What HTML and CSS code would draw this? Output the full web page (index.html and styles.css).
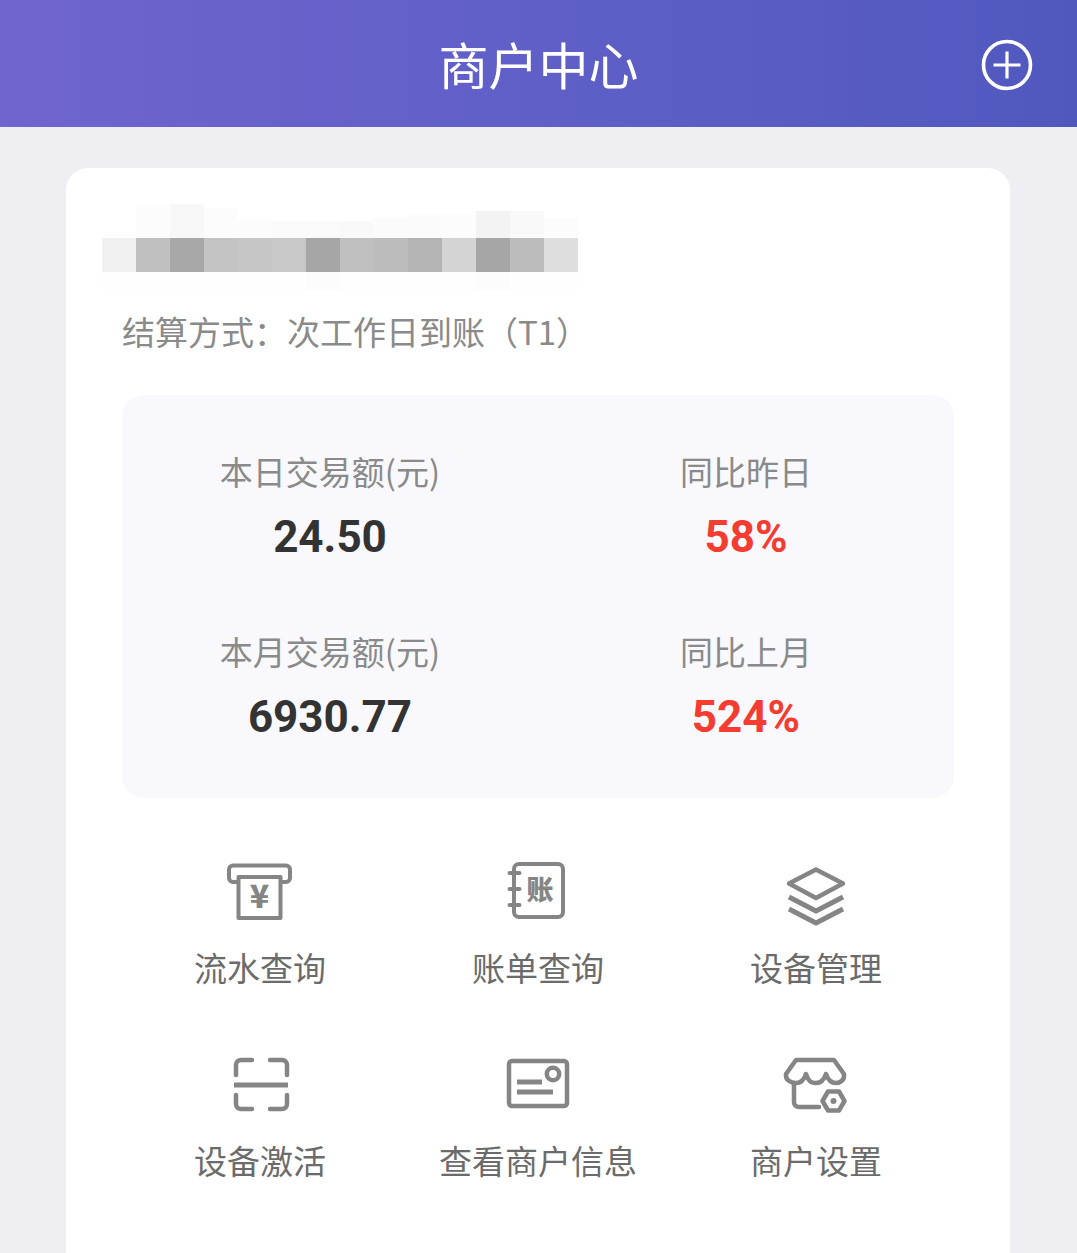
FILE: index.html
```html
<!DOCTYPE html>
<html lang="zh-CN">
<head>
<meta charset="utf-8">
<title>商户中心</title>
<link rel="stylesheet" href="styles.css">
</head>
<body>
<header class="topbar">
  <h1 class="topbar-title">商户中心</h1>
  <svg class="topbar-add" width="54" height="54" viewBox="0 0 54 54"><circle cx="27" cy="27" r="23.5" fill="none" stroke="#fff" stroke-width="3.6"/><path d="M27 13.500V40.500M13.500 27H40.500" fill="none" stroke="#fff" stroke-width="3.200"/></svg>
</header>
<main class="card">
  <div class="mosaic" aria-hidden="true">
    <div class="mosaic-row mosaic-top"><i></i><i></i><i></i><i></i><i></i><i></i><i></i><i></i><i></i><i></i><i></i><i></i><i></i><i></i></div>
    <div class="mosaic-row mosaic-mid"><i></i><i></i><i></i><i></i><i></i><i></i><i></i><i></i><i></i><i></i><i></i><i></i><i></i><i></i></div>
    <div class="mosaic-row mosaic-low"><i></i><i></i><i></i><i></i><i></i><i></i><i></i><i></i><i></i><i></i><i></i><i></i><i></i><i></i></div>
  </div>
  <p class="settle">结算方式：次工作日到账（T1）</p>
  <section class="stats">
    <div class="stat"><span class="stat-label">本日交易额(元)</span><strong class="stat-value">24.50</strong></div>
    <div class="stat"><span class="stat-label">同比昨日</span><strong class="stat-value stat-up">58%</strong></div>
    <div class="stat"><span class="stat-label">本月交易额(元)</span><strong class="stat-value">6930.77</strong></div>
    <div class="stat"><span class="stat-label">同比上月</span><strong class="stat-value stat-up">524%</strong></div>
  </section>
  <nav class="menu">
    <a class="menu-item">
      <svg class="icon" viewBox="0 0 80 80"><path d="M17 31H13a4 4 0 0 1-4-4V18.500a4 4 0 0 1 4-4H66a4 4 0 0 1 4 4V27a4 4 0 0 1-4 4H62"/><rect x="18.500" y="26" width="42" height="41"/><text class="icon-glyph" x="39.500" y="57" font-size="32">¥</text></svg>
      <span>流水查询</span>
    </a>
    <a class="menu-item">
      <svg class="icon" viewBox="0 0 80 80"><path d="M16 22V18a5 5 0 0 1 5-5H60a5 5 0 0 1 5 5V61a5 5 0 0 1-5 5H21a5 5 0 0 1-5-5V22"/><path d="M11.500 22H21.500M11.500 38H21.500M11.500 54H21.500"/><text class="icon-glyph" x="42" y="49" font-size="27">账</text></svg>
      <span>账单查询</span>
    </a>
    <a class="menu-item">
      <svg class="icon icon-bold" viewBox="0 0 80 80"><path d="M40 18.500L67 32.500L40 47L13 32.500Z"/><path class="icon-heavy" d="M13 46L40 60L67 46"/><path class="icon-heavy" d="M13 58L40 72L67 58"/></svg>
      <span>设备管理</span>
    </a>
    <a class="menu-item">
      <svg class="icon icon-bold" viewBox="0 0 80 80"><path d="M32 16H21a5 5 0 0 0-5 5V31"/><path d="M50 16H62a5 5 0 0 1 5 5V31"/><path d="M16 51V60a5 5 0 0 0 5 5H32"/><path d="M67 51V60a5 5 0 0 1-5 5H50"/><path class="icon-heavy" d="M14 41H68"/></svg>
      <span>设备激活</span>
    </a>
    <a class="menu-item">
      <svg class="icon icon-bold" viewBox="0 0 80 80"><rect x="11" y="17" width="58" height="45" rx="3"/><circle cx="55" cy="30" r="6.200"/><path class="icon-heavy" d="M19 38H44M19 48H55"/></svg>
      <span>查看商户信息</span>
    </a>
    <a class="menu-item">
      <svg class="icon icon-bold" viewBox="0 0 80 80"><path d="M20 16H58L68 30C69 36 64 39 60 39C55 39 52 36 50 30C48 36 45 39 40 39C34 39 32 36 30 30C28 36 25 39 20 39C15 39 9 36 10 30Z"/><path d="M18 40V58a5 5 0 0 0 5 5H43"/><path d="M46.500 57L52 47.500H63L68.500 57L63 66.500H52Z"/><circle class="icon-dot" cx="57.500" cy="57" r="3"/></svg>
      <span>商户设置</span>
    </a>
  </nav>
</main>
</body>
</html>
```

FILE: styles.css
```css
* { box-sizing: border-box; }

html, body {
  margin: 0;
  height: 1253px;
  overflow: hidden;
}

body {
  background: #eeeef3;
  font-family: "Noto Sans CJK SC", Roboto, sans-serif;
  font-weight: 400;
  color: #8a8a8a;
}

.topbar {
  position: relative;
  height: 127px;
  display: flex;
  align-items: center;
  justify-content: center;
  background: linear-gradient(90deg, #7064ce 0%, #6160c8 45%, #5058be 100%);
}

.topbar-title {
  margin: 0;
  padding-bottom: 2px;
  font-size: 50px;
  line-height: 60px;
  font-weight: 400;
  color: #fff;
}

.topbar-add {
  position: absolute;
  left: 980px;
  top: 38px;
}

.card {
  margin: 41px 67px 0 66px;
  height: 1085px;
  padding: 36px 56px 0;
  background: #fff;
  border-radius: 22px 22px 0 0;
}

.mosaic {
  margin-left: -20px;
  width: 476px;
}

.mosaic-row {
  display: grid;
  grid-template-columns: repeat(14, 34px);
  align-items: end;
}

.mosaic-top { height: 34px; }
.mosaic-mid { height: 34px; }
.mosaic-low { height: 18px; align-items: start; }

.mosaic-row i { display: block; height: 100%; }

.mosaic-top i:nth-child(1) { height: 0; }
.mosaic-top i:nth-child(2) { background: #fcfcfc; height: 33px; }
.mosaic-top i:nth-child(3) { background: #f8f8f8; height: 34px; }
.mosaic-top i:nth-child(4) { background: #fcfcfc; height: 30px; }
.mosaic-top i:nth-child(5) { background: #fcfcfc; height: 18px; }
.mosaic-top i:nth-child(6) { background: #fafafa; height: 17px; }
.mosaic-top i:nth-child(7) { background: #fafafa; height: 17px; }
.mosaic-top i:nth-child(8) { background: #f9f9f9; height: 17px; }
.mosaic-top i:nth-child(9) { background: #fbfbfb; height: 20px; }
.mosaic-top i:nth-child(10) { background: #fbfbfb; height: 24px; }
.mosaic-top i:nth-child(11) { background: #fcfcfc; height: 24px; }
.mosaic-top i:nth-child(12) { background: #f3f3f3; height: 27px; }
.mosaic-top i:nth-child(13) { background: #f9f9f9; height: 27px; }
.mosaic-top i:nth-child(14) { background: #fcfcfc; height: 20px; }

.mosaic-mid i:nth-child(1) { background: #f0f0f0; }
.mosaic-mid i:nth-child(2) { background: #c0c0c0; }
.mosaic-mid i:nth-child(3) { background: #a8a8a8; }
.mosaic-mid i:nth-child(4) { background: #c4c4c4; }
.mosaic-mid i:nth-child(5) { background: #c6c6c6; }
.mosaic-mid i:nth-child(6) { background: #c8c8c8; }
.mosaic-mid i:nth-child(7) { background: #a6a6a6; }
.mosaic-mid i:nth-child(8) { background: #c0c0c0; }
.mosaic-mid i:nth-child(9) { background: #bcbcbc; }
.mosaic-mid i:nth-child(10) { background: #b4b4b4; }
.mosaic-mid i:nth-child(11) { background: #d4d4d4; }
.mosaic-mid i:nth-child(12) { background: #a6a6a6; }
.mosaic-mid i:nth-child(13) { background: #bcbcbc; }
.mosaic-mid i:nth-child(14) { background: #dedede; }

.mosaic-low i { background: #fefefe; }
.mosaic-low i:nth-child(7),
.mosaic-low i:nth-child(12) { background: #fcfcfc; }

.settle {
  margin: 18px 0 0;
  height: 46px;
  font-size: 33px;
  line-height: 46px;
  white-space: nowrap;
}

.stats {
  margin-top: 41px;
  padding: 53px 0 51px;
  display: grid;
  grid-template-columns: 1fr 1fr;
  row-gap: 61px;
  background: #f9f9fd;
  border-radius: 22px;
}

.stat {
  display: flex;
  flex-direction: column;
  align-items: center;
  height: 119px;
}

.stat-label {
  font-size: 33px;
  line-height: 46px;
}

.stat-value {
  margin-top: 13px;
  font-family: Roboto, "Noto Sans CJK SC", sans-serif;
  font-size: 44px;
  line-height: 60px;
  font-weight: 700;
  color: #333333;
}

.stat-up { color: #f43c30; }

.menu {
  margin: 53px -1px 0;
  display: grid;
  grid-template-columns: repeat(3, 1fr);
  row-gap: 54px;
}

.menu-item {
  display: flex;
  flex-direction: column;
  align-items: center;
  gap: 13px;
  font-size: 33px;
  line-height: 46px;
  color: #6b6b6b;
}

.icon {
  display: block;
  width: 80px;
  height: 80px;
  fill: none;
  stroke: #858585;
  stroke-width: 4;
  stroke-linecap: round;
  stroke-linejoin: round;
}

.icon-bold { stroke-width: 4.500; }
.icon-heavy { stroke-width: 5; stroke-linecap: butt; }
.icon-dot { fill: #858585; stroke: none; }

.icon-glyph {
  font-family: "Noto Sans CJK SC", sans-serif;
  font-weight: 900;
  text-anchor: middle;
  fill: #858585;
  stroke: none;
}
```
